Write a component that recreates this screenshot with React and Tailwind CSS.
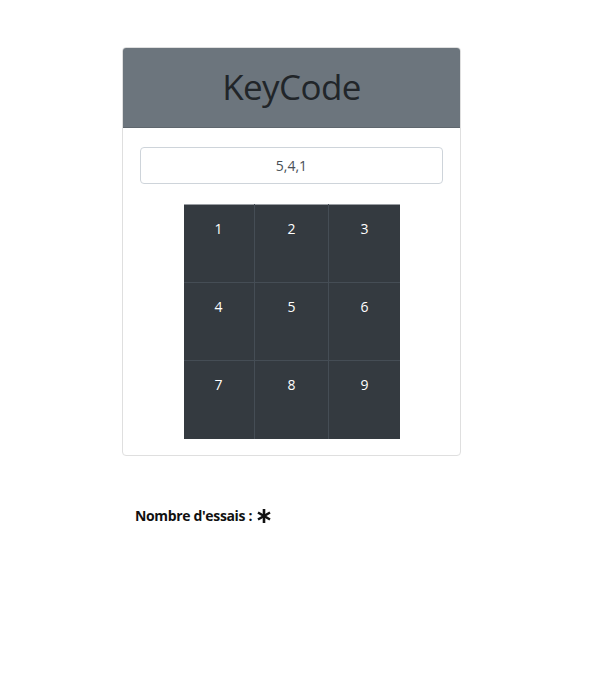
export default function App() {
  const rows = [
    ["1", "2", "3"],
    ["4", "5", "6"],
    ["7", "8", "9"],
  ];

  return (
    <main className="w-[600px] h-[700px] bg-white font-['Open_Sans',sans-serif] text-[#212529]">
      {/* Card */}
      <div className="ml-[122px] pt-[47px] w-[339px]">
        <div className="border border-[#dfdfdf] rounded-[4px] overflow-hidden">
          <div className="bg-[#6c757d] h-[80px] flex items-center justify-center border-b border-[#5f676e]">
            <h1 className="text-[35px] font-normal text-[#212529] leading-none tracking-[-0.6px] -mt-[2px]">KeyCode</h1>
          </div>
          <div className="px-[17px] pt-[19px] pb-[16px]">
            <div className="h-[37px] border border-[#ced4da] rounded-[4px] flex items-center justify-center text-[14px] text-[#495057]">
              5,4,1
            </div>
            <div className="mt-[20px] flex justify-center">
              <table className="w-[216px] bg-[#343a40] border-collapse border-t border-t-[#9a9ea3]">
                <tbody>
                  {rows.map((row, i) => (
                    <tr key={i}>
                      {row.map((n, j) => (
                        <td
                          key={n}
                          className={`h-[78px] align-top text-center pt-[13px] text-[14px] text-white border-[#454d55] ${
                            i > 0 ? "border-t" : ""
                          } ${j > 0 ? "border-l" : ""}`}
                        >
                          {n}
                        </td>
                      ))}
                    </tr>
                  ))}
                </tbody>
              </table>
            </div>
          </div>
        </div>
      </div>

      {/* Attempts */}
      <div className="ml-[135px] mt-[49px] flex items-center text-[14px] font-bold text-[#111]">
        <span className="tracking-[-0.35px]">Nombre d'essais :</span>
        <svg className="ml-[4px] mt-[1px] w-[16px] h-[16px]" viewBox="0 0 16 16" stroke="#111" strokeWidth="2.6" strokeLinecap="butt">
          <line x1="8" y1="1" x2="8" y2="15" />
          <line x1="2" y1="4.5" x2="14" y2="11.5" />
          <line x1="2" y1="11.5" x2="14" y2="4.5" />
        </svg>
      </div>
    </main>
  );
}
